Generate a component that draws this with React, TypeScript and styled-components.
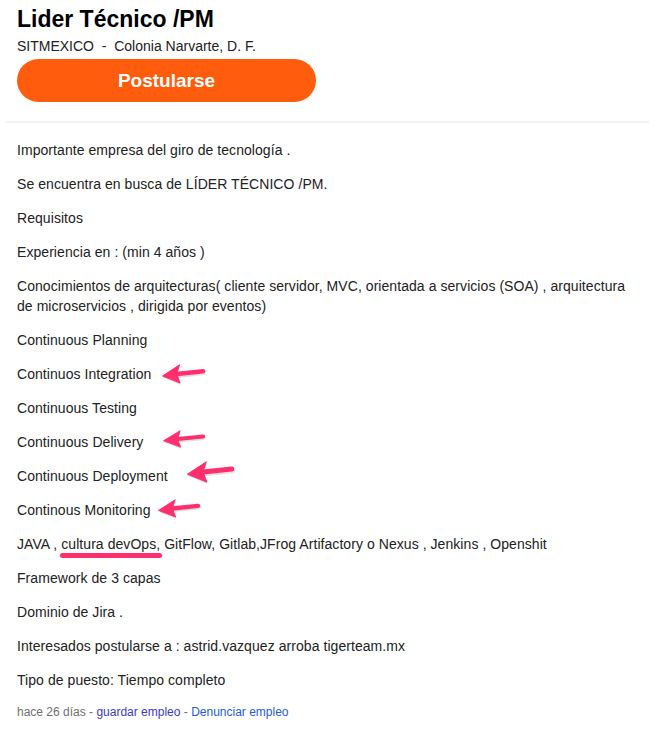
import React from "react";
import styled, { createGlobalStyle } from "styled-components";

const Global = createGlobalStyle`
  html, body { margin: 0; padding: 0; background: #fff; }
  body { font-family: "Liberation Sans", Arial, Helvetica, sans-serif; color: #222; }
`;

const Page = styled.div`
  width: 643px;
  padding-left: 6px;
  padding-bottom: 12px;
`;

const Header = styled.header`
  display: flex;
  flex-direction: column;
  align-items: flex-start;
  padding: 5px 0 0 11px;
`;

const Title = styled.h1`
  margin: 0;
  font-size: 23px;
  line-height: 28px;
  font-weight: 700;
  color: #000;
`;

const Company = styled.div`
  margin-top: 4px;
  font-size: 14px;
  line-height: 18px;
  color: #222;
  white-space: pre;
`;

const ApplyButton = styled.button`
  margin-top: 4px;
  width: 299px;
  height: 43px;
  border: none;
  border-radius: 22px;
  background: #ff5c0d;
  color: #fff;
  font-family: "Liberation Sans", Arial, sans-serif;
  font-size: 19px;
  font-weight: 700;
  cursor: pointer;
`;

const Divider = styled.hr`
  margin: 19px 0 0 0;
  border: none;
  height: 2px;
  background: #f3f3f3;
`;

const Body = styled.div`
  width: 620px;
  padding: 17px 0 0 11px;
  display: flex;
  flex-direction: column;
  gap: 14px;
`;

const Para = styled.p`
  position: relative;
  margin: 0;
  font-size: 14px;
  line-height: 20px;
  letter-spacing: 0.06px;
  color: #222;
`;

const Marked = styled.span`
  position: relative;
  &::after {
    content: "";
    position: absolute;
    left: -1px;
    right: -2px;
    top: calc(100% + 1px);
    height: 5px;
    border-radius: 3px;
    background: #ff2f6e;
  }
`;

const ArrowWrap = styled.svg`
  position: absolute;
  overflow: visible;
`;

const Arrow = ({ left, top, width, height }: { left: number; top: number; width: number; height: number }) => (
  <ArrowWrap
    style={{ left, top }}
    width={width}
    height={height}
    viewBox="0 0 44 20"
    preserveAspectRatio="none"
  >
    <path d="M15 10.5 L42 7.6" stroke="rgba(0,0,0,0.12)" strokeWidth="4.5" strokeLinecap="round" transform="translate(0.6,1.2)" />
    <path d="M0.5 12.5 L18 1 L15 10 L18.5 19.5 Z" fill="rgba(0,0,0,0.12)" transform="translate(0.6,1.2)" />
    <path d="M15 10 L42 7.2" stroke="#ff2f6e" strokeWidth="4.5" strokeLinecap="round" />
    <path d="M0.5 12 L18 0.8 L15 9.8 L18.5 19 Z" fill="#ff2f6e" strokeLinejoin="round" stroke="#ff2f6e" strokeWidth="1" />
  </ArrowWrap>
);

const Footer = styled.div`
  margin-top: 14px;
  padding-left: 11px;
  font-size: 12px;
  line-height: 16px;
  color: #6f6f6f;
`;

const FooterLink = styled.a<{ $tone: "visited" | "plain" }>`
  color: ${(p) => (p.$tone === "visited" ? "#3a3ad0" : "#2260d8")};
  text-decoration: none;
`;

export default function App() {
  return (
    <>
      <Global />
      <Page>
        <Header>
          <Title>Lider Técnico /PM</Title>
          <Company>{"SITMEXICO  -  Colonia Narvarte, D. F."}</Company>
          <ApplyButton>Postularse</ApplyButton>
        </Header>
        <Divider />
        <Body>
          <Para>Importante empresa del giro de tecnología .</Para>
          <Para>Se encuentra en busca de LÍDER TÉCNICO /PM.</Para>
          <Para>Requisitos</Para>
          <Para>Experiencia en : (min 4 años )</Para>
          <Para>
            Conocimientos de arquitecturas( cliente servidor, MVC, orientada a servicios (SOA) , arquitectura de
            microservicios , dirigida por eventos)
          </Para>
          <Para>Continuous Planning</Para>
          <Para>
            Continuos Integration
            <Arrow left={145} top={0} width={43} height={20} />
          </Para>
          <Para>Continuous Testing</Para>
          <Para>
            Continuous Delivery
            <Arrow left={146} top={-2} width={42} height={18} />
          </Para>
          <Para>
            Continuous Deployment
            <Arrow left={170} top={-5} width={47} height={22} />
          </Para>
          <Para>
            Continous Monitoring
            <Arrow left={141} top={-1} width={42} height={19} />
          </Para>
          <Para>
            JAVA , <Marked>cultura devOps,</Marked> GitFlow, Gitlab,JFrog Artifactory o Nexus , Jenkins , Openshit
          </Para>
          <Para>Framework de 3 capas</Para>
          <Para>Dominio de Jira .</Para>
          <Para>Interesados postularse a : astrid.vazquez arroba tigerteam.mx</Para>
          <Para>Tipo de puesto: Tiempo completo</Para>
        </Body>
        <Footer>
          hace 26 días - <FooterLink $tone="visited" href="#">guardar empleo</FooterLink> -{" "}
          <FooterLink $tone="plain" href="#">Denunciar empleo</FooterLink>
        </Footer>
      </Page>
    </>
  );
}
